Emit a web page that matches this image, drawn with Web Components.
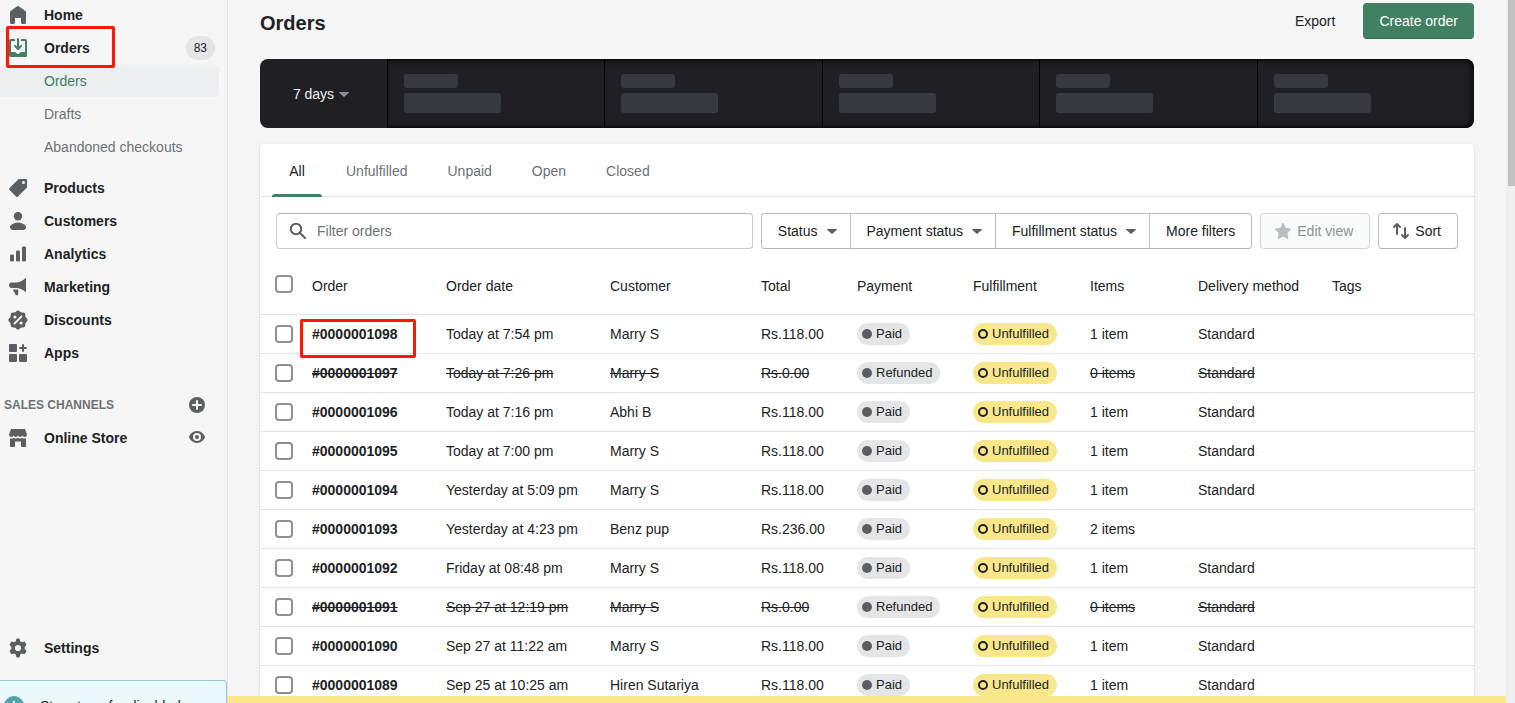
<!DOCTYPE html>
<html lang="en">
<head>
<meta charset="utf-8">
<title>Orders</title>
<style>
  html, body { height: 100%; }
  body {
    margin: 0;
    overflow: hidden;
    background: #f6f6f6;
    color: #202223;
    font: 14px/20px "Liberation Sans", Arial, sans-serif;
    --icon: #5c5f62;
    --green: #428062;
    --subdued: #6d7175;
    --line: #e1e3e5;
    --mark: #ff1706;
  }
</style>
</head>
<body>
<admin-frame>
  <side-nav slot="nav">
    <nav-item icon="home">Home</nav-item>
    <nav-item icon="orders" active marked count="83">Orders</nav-item>
    <nav-item sub selected>Orders</nav-item>
    <nav-item sub>Drafts</nav-item>
    <nav-item sub>Abandoned checkouts</nav-item>
    <nav-item icon="products" spaced>Products</nav-item>
    <nav-item icon="customers">Customers</nav-item>
    <nav-item icon="analytics">Analytics</nav-item>
    <nav-item icon="marketing">Marketing</nav-item>
    <nav-item icon="discounts">Discounts</nav-item>
    <nav-item icon="apps">Apps</nav-item>
    <nav-heading label="Add sales channel">SALES CHANNELS</nav-heading>
    <nav-item icon="store" action="eye" action-label="View your online store">Online Store</nav-item>
    <nav-item slot="footer" icon="settings">Settings</nav-item>
    <info-card slot="footer">Store transfer disabled</info-card>
  </side-nav>

  <page-header>
    Orders
    <ui-button slot="actions" plain>Export</ui-button>
    <ui-button slot="actions" primary>Create order</ui-button>
  </page-header>
  <stats-bar cells="5">7 days</stats-bar>
  <order-card>
    <tab-bar tabs="All,Unfulfilled,Unpaid,Open,Closed"></tab-bar>
    <filter-bar></filter-bar>
    <order-table></order-table>
  </order-card>
</admin-frame>

<script>
const ICONS = {
  home: '<path d="M18 7.261V17.5c0 .841-.672 1.5-1.5 1.5h-2c-.828 0-1.5-.659-1.5-1.5V13H7v4.477C7 18.318 6.328 19 5.5 19h-2c-.828 0-1.5-.682-1.5-1.523V7.261a1.5 1.5 0 0 1 .615-1.21l6.59-4.82a1.481 1.481 0 0 1 1.59 0l6.59 4.82A1.5 1.5 0 0 1 18 7.26z"/>',
  orders: '<path d="M11 1a1 1 0 1 0-2 0v7.586L7.707 7.293a1 1 0 0 0-1.414 1.414l3 3a1 1 0 0 0 1.414 0l3-3a1 1 0 0 0-1.414-1.414L11 8.586V1z"/><path d="M3 14V3h4V1H2.5A1.5 1.5 0 0 0 1 2.5v15A1.5 1.5 0 0 0 2.5 19h15a1.5 1.5 0 0 0 1.5-1.5v-15A1.5 1.5 0 0 0 17.5 1H13v2h4v11h-3.5c-.775 0-1.388.662-1.926 1.244l-.11.12A1.994 1.994 0 0 1 10 16a1.994 1.994 0 0 1-1.463-.637l-.111-.12C7.888 14.664 7.275 14 6.5 14H3z"/>',
  products: '<path fill-rule="evenodd" d="M10.293 1.293A1 1 0 0 1 11 1h7a1 1 0 0 1 1 1v7a1 1 0 0 1-.293.707l-9 9a1 1 0 0 1-1.414 0l-7-7a1 1 0 0 1 0-1.414l9-9zM15.5 6a1.5 1.5 0 1 0 0-3 1.5 1.5 0 0 0 0 3z"/>',
  customers: '<circle cx="10" cy="5.2" r="4.2"/><path d="M2.6 14.5C4 13.4 6.7 11.6 10 11.6s6 1.800 7.400 2.900c.6.500.8 1.300.6 2.050l-.35 1A2.1 2.1 0 0 1 15.700 19H4.300a2.100 2.100 0 0 1-1.950-1.450l-.35-1c-.2-.75 0-1.550.6-2.050z"/>',
  analytics: '<rect x="2" y="10.500" width="4" height="7" rx="1.300"/><rect x="8" y="6.500" width="4" height="11" rx="1.300"/><rect x="14" y="2.500" width="4" height="15" rx="1.300"/>',
  marketing: '<path d="M18 1.200v13.600c0 .2-.2.300-.4.200-2.700-2.200-5.300-3.700-8.600-4H3.500C2 11 1 9.700 1 8.200S2 5.500 3.500 5.500H9c3.300-.2 5.900-1.800 8.600-4.400.2-.2.4-.1.4.1zM5.200 12.500h5v4.800c0 .6-.4 1-1 1h-.9c-.4 0-.7-.2-.9-.6L6.900 16c-.2-.6-.6-1-1-1.300-.5-.4-.8-1.200-.7-2.200z"/>',
  discounts: '<rect x="2.600" y="2.600" width="14.800" height="14.800" rx="2.400"/><rect x="2.600" y="2.600" width="14.800" height="14.800" rx="2.400" transform="rotate(45 10 10)"/><path d="M6.500 13.500l7-7" stroke="#f6f6f6" stroke-width="1.800" stroke-linecap="round"/><circle cx="6.900" cy="7" r="1.600" fill="#f6f6f6"/><circle cx="13.100" cy="13" r="1.600" fill="#f6f6f6"/>',
  apps: '<rect x="1" y="1" width="8" height="8" rx="1"/><rect x="1" y="11" width="8" height="8" rx="1"/><rect x="11" y="11" width="8" height="8" rx="1"/><path d="M15 2v6M12 5h6" stroke="currentColor" stroke-width="2" stroke-linecap="round"/>',
  store: '<path d="M3 1h14l2 5.500c0 1.500-1 2.500-2.300 2.500-1.200 0-2-.8-2.300-1.700C14.100 8.200 13.300 9 12.200 9S10.300 8.200 10 7.300C9.700 8.200 8.900 9 7.800 9s-1.900-.8-2.200-1.700C5.300 8.200 4.500 9 3.300 9 2 9 1 8 1 6.500z"/><path d="M2 10.300c1.300.6 2.800.3 3.700-.6.900.8 3 1 4.300 0 1.300 1 3.400.8 4.300 0 .9.900 2.400 1.200 3.700.6V18c0 .6-.4 1-1 1h-3c-.6 0-1-.4-1-1v-4.500H7V18c0 .6-.4 1-1 1H3c-.6 0-1-.4-1-1z"/>',
  settings: '<path fill-rule="evenodd" d="M8.100 1.600c.1-.7.500-1.100 1.100-1.100h1.600c.6 0 1 .4 1.100 1.100l.3 1.700c.6.200 1.200.6 1.800 1l1.700-.6c.6-.2 1.100 0 1.400.5l1.100 2c.3.500.2 1.100-.3 1.500L16.600 9v2l1.300 1.100c.5.4.6 1 .3 1.500l-1.100 2c-.3.500-.8.700-1.400.5l-1.700-.6c-.6.500-1.200.8-1.800 1.100l-.3 1.800c-.1.700-.5 1.100-1.100 1.100H9.200c-.6 0-1-.4-1.100-1.100l-.3-1.800c-.6-.3-1.200-.6-1.800-1.100l-1.700.6c-.6.200-1.100 0-1.400-.5l-1.100-2c-.3-.5-.2-1.100.3-1.500L3.400 11V9L2.100 7.700c-.5-.4-.6-1-.3-1.500l1.100-2c.3-.5.800-.7 1.400-.5l1.700.6c.6-.4 1.200-.8 1.800-1zM10 13.100a3.100 3.100 0 1 0 0-6.200 3.100 3.100 0 0 0 0 6.200z"/>',
  plus: '<path fill-rule="evenodd" d="M10 18a8 8 0 1 0 0-16 8 8 0 0 0 0 16zM9 9V6a1 1 0 1 1 2 0v3h3a1 1 0 1 1 0 2h-3v3a1 1 0 1 1-2 0v-3H6a1 1 0 1 1 0-2z"/>',
  eye: '<path fill-rule="evenodd" d="M17.930 8.630C17.840 8.400 15.610 3 10 3 4.400 3 2.160 8.400 2.070 8.630a1 1 0 0 0 0 .74C2.160 9.600 4.400 15 10 15c5.610 0 7.840-5.400 7.930-5.630a1 1 0 0 0 0-.74zM10 13a4 4 0 1 1 0-8 4 4 0 0 1 0 8zm0-6a2 2 0 1 0 0 4 2 2 0 0 0 0-4z"/>',
  caret: '<path d="M5.600 8h8.800c.5 0 .7.500.4.800l-4.400 4a.6.600 0 0 1-.8 0l-4.400-4c-.3-.3-.1-.8.400-.8z"/>',
  search: '<circle cx="8" cy="8" r="5.200" fill="none" stroke="currentColor" stroke-width="2"/><path d="M11.800 11.800l5.200 5.200" stroke="currentColor" stroke-width="2.200" stroke-linecap="round"/>',
  star: '<path d="M9.300 2.500c.3-.6 1.100-.6 1.400 0l2 4.300 4.600.6c.7.100.9.900.5 1.400l-3.400 3.300.9 4.800c.1.700-.6 1.100-1.200.8L10 15.400l-4.100 2.300c-.6.300-1.300-.1-1.200-.8l.9-4.800-3.400-3.300c-.4-.5-.2-1.300.5-1.400l4.600-.6z"/>',
  sort: '<path d="M6 13V3.500M3 6l3-3 3 3M14 7v9.500M11 14l3 3 3-3" fill="none" stroke="currentColor" stroke-width="2" stroke-linecap="round" stroke-linejoin="round"/>',
  info: '<circle cx="10" cy="10" r="10"/><path d="M10 5.800v1M10 9.500v5" stroke="#ebf9fc" stroke-width="2" stroke-linecap="round"/>'
};

class BaseElement extends HTMLElement {
  connectedCallback() {
    if (this.shadowRoot) return;
    this.attachShadow({ mode: 'open' }).innerHTML =
      `<style>:host,*,*::after{box-sizing:border-box}${this.styles()}</style>${this.markup()}`;
  }
}

customElements.define('ui-icon', class extends BaseElement {
  styles() { return ':host{display:block;flex:none;width:20px;height:20px}svg{display:block;width:100%;height:100%;fill:currentColor}'; }
  markup() { return `<svg viewBox="0 0 20 20" aria-hidden="true">${ICONS[this.getAttribute('name')]}</svg>`; }
});

customElements.define('admin-frame', class extends BaseElement {
  styles() { return `
    :host { display: grid; grid-template-columns: 228px minmax(0, 1fr) 9px; height: 100vh; overflow: hidden; }
    .page { display: flex; flex-direction: column; min-height: 0; min-width: 0; }
    main { flex: 1; min-height: 0; overflow: hidden; padding: 0 32px; }
    .strip { flex: none; height: 7px; background: #f8e88b; }
    .track { background: #f0f0f0; padding-left: 2px; }
    .thumb { height: 186px; background: #c1c1c1; }`; }
  markup() { return `
    <slot name="nav"></slot>
    <div class="page"><main><slot></slot></main><div class="strip"></div></div>
    <div class="track"><div class="thumb"></div></div>`; }
});

customElements.define('side-nav', class extends BaseElement {
  styles() { return `
    :host { display: flex; min-height: 0; border-right: 1px solid var(--line); }
    nav { flex: 1; min-width: 0; display: flex; flex-direction: column; }
    .links { flex: 1; min-height: 0; display: flex; flex-direction: column; gap: 1px; margin-top: -1px; }
    .footer { flex: none; display: flex; flex-direction: column; gap: 16px; }`; }
  markup() { return '<nav aria-label="Main"><div class="links"><slot></slot></div><div class="footer"><slot name="footer"></slot></div></nav>'; }
});

customElements.define('nav-item', class extends BaseElement {
  styles() { return `
    :host { display: flex; align-items: center; position: relative; flex: none; height: 32px; margin-right: 8px; border-radius: 0 4px 4px 0; }
    :host([spaced]) { margin-top: 8px; }
    :host([selected]) { background: #edeeef; }
    :host([marked]) { z-index: 1; }
    a { flex: 1; display: flex; align-items: center; gap: 16px; padding-left: 8px; color: inherit; text-decoration: none; font-weight: 700; }
    ui-icon { color: var(--icon); }
    :host([active]) a ui-icon { color: var(--green); }
    :host([sub]) a { padding-left: 44px; font-weight: 400; color: var(--subdued); }
    :host([selected]) a { color: var(--green); }
    .count { margin-right: 4px; padding: 0 8px; border-radius: 12px; background: #e4e5e7; font-size: 12px; line-height: 24px; }
    button { margin: 0 12px 0 0; padding: 0; border: 0; background: none; }
    .mark { position: absolute; left: 6px; top: -6px; width: 109px; height: 42px; border: 3px solid var(--mark); border-radius: 2px; pointer-events: none; }`; }
  markup() {
    const at = n => this.getAttribute(n);
    return `<a href="#">${at('icon') ? `<ui-icon name="${at('icon')}"></ui-icon>` : ''}<span><slot></slot></span></a>
      ${at('count') ? `<span class="count">${at('count')}</span>` : ''}
      ${at('action') ? `<button type="button" aria-label="${at('action-label')}"><ui-icon name="${at('action')}"></ui-icon></button>` : ''}
      ${this.hasAttribute('marked') ? '<span class="mark"></span>' : ''}`;
  }
});

customElements.define('nav-heading', class extends BaseElement {
  styles() { return `
    :host { display: flex; align-items: center; justify-content: space-between; flex: none; height: 32px; margin: 19px 20px 0 4px; }
    h2 { margin: 0; font-size: 12px; line-height: 16px; font-weight: 700; color: var(--subdued); }
    button { padding: 0; border: 0; background: none; color: var(--icon); }`; }
  markup() { return `<h2><slot></slot></h2><button type="button" aria-label="${this.getAttribute('label')}"><ui-icon name="plus"></ui-icon></button>`; }
});

customElements.define('info-card', class extends BaseElement {
  styles() { return `
    :host { display: flex; gap: 16px; height: 23px; overflow: hidden; padding: 15px 4px 0; border: 1px solid #98c6cd; border-width: 1px 1px 0 0; border-radius: 0 4px 0 0; background: #ebf9fc; }
    ui-icon { color: #51a3ab; }
    span { white-space: nowrap; }`; }
  markup() { return '<ui-icon name="info"></ui-icon><span><slot></slot></span>'; }
});

customElements.define('page-header', class extends BaseElement {
  styles() { return `
    :host { display: flex; align-items: center; justify-content: space-between; padding: 3px 0 20px; }
    h1 { margin: 0; padding-top: 4px; font-size: 20px; line-height: 28px; font-weight: 700; }
    div { display: flex; gap: 12px; }`; }
  markup() { return '<h1><slot></slot></h1><div><slot name="actions"></slot></div>'; }
});

customElements.define('ui-button', class extends BaseElement {
  styles() { return `
    :host { display: block; flex: none; }
    button { display: flex; align-items: center; gap: 4px; height: 36px; width: 100%; margin: 0; padding: 0 16px; border: 1px solid #babfc3; border-bottom-color: #aeb4b9; border-radius: 4px; background: #fff; color: #202223; font: inherit; white-space: nowrap; }
    :host([plain]) button, :host([primary]) button { padding: 0 15px; }
    :host([plain]) button { background: none; border-color: transparent; }
    :host([primary]) button { background: var(--green); border-color: var(--green); border-bottom-color: #2f684c; color: #fff; }
    :host([icon]) button { padding-left: 12px; }
    :host([disclosure]) button { padding-right: 8px; }
    :host([first]) button { border-radius: 4px 0 0 4px; }
    :host([middle]) button { border-radius: 0; border-left: 0; }
    :host([last]) button { border-radius: 0 4px 4px 0; border-left: 0; }
    button:disabled { background: #fafbfb; border-color: #d2d5d8; color: #8c9196; }
    ui-icon { color: var(--icon); }
    button:disabled ui-icon { color: #babec3; }`; }
  markup() {
    const icon = this.getAttribute('icon');
    return `<button type="button"${this.hasAttribute('disabled') ? ' disabled' : ''}>${icon ? `<ui-icon name="${icon}"></ui-icon>` : ''}<span><slot></slot></span>${this.hasAttribute('disclosure') ? '<ui-icon name="caret"></ui-icon>' : ''}</button>`;
  }
});

customElements.define('stats-bar', class extends BaseElement {
  styles() { return `
    :host { display: flex; height: 69px; margin-bottom: 16px; border-radius: 8px; overflow: hidden; background: #202024; }
    button { flex: none; width: 127px; display: flex; align-items: center; justify-content: center; margin: 0; padding: 0; border: 0; background: none; color: #f1f2f3; font: inherit; }
    ui-icon { color: #8c8f93; }
    .cells { flex: 1; display: flex; position: relative; }
    .cells::after { content: ""; position: absolute; inset: 0; border-radius: 0 8px 8px 0; box-shadow: inset -2px 0 8px -2px #000, inset 0 3px 5px -3px #000, inset 0 -3px 5px -3px #000; }
    .cell { flex: 1; border-left: 1px solid #000; padding: 15px 16px 0; }
    .label, .value { border-radius: 3px; background: #36393d; }
    .label { width: 54px; height: 14px; margin-bottom: 5px; }
    .value { width: 97px; height: 20px; }`; }
  markup() {
    const cell = '<div class="cell"><div class="label"></div><div class="value"></div></div>';
    return `<button type="button"><slot></slot><ui-icon name="caret"></ui-icon></button><div class="cells">${cell.repeat(+this.getAttribute('cells'))}</div>`;
  }
});

customElements.define('order-card', class extends BaseElement {
  styles() { return ':host{display:block;background:#fff;border-radius:4px;box-shadow:0 0 5px rgba(23,24,24,.05),0 1px 2px rgba(0,0,0,.15)}'; }
  markup() { return '<slot></slot>'; }
});

customElements.define('tab-bar', class extends BaseElement {
  styles() { return `
    :host { display: flex; gap: 8px; height: 53px; padding: 0 12px; border-bottom: 1px solid var(--line); }
    button { position: relative; min-width: 50px; margin: 0; padding: 2px 16px 0; border: 0; background: none; font: inherit; color: var(--subdued); text-align: center; }
    button[aria-selected=true] { color: #202223; }
    button[aria-selected=true]::after { content: ""; position: absolute; left: 0; right: 0; bottom: -1px; height: 3px; border-radius: 3px 3px 0 0; background: var(--green); }`; }
  markup() { return this.getAttribute('tabs').split(',').map((t, i) => `<button type="button" role="tab" aria-selected="${i === 0}">${t}</button>`).join(''); }
  connectedCallback() { super.connectedCallback(); this.setAttribute('role', 'tablist'); }
});

customElements.define('filter-bar', class extends BaseElement {
  styles() { return `
    :host { display: flex; gap: 8px; padding: 16px; }
    label { flex: 1; min-width: 0; height: 36px; display: flex; align-items: center; gap: 8px; padding: 0 12px 0 11px; border: 1px solid #c9cccf; border-top-color: #aeb4b9; border-radius: 4px; }
    ui-icon { color: var(--icon); }
    input { flex: 1; min-width: 0; margin: 0; padding: 0 1px; border: 0; outline: 0; background: none; color: inherit; font: inherit; appearance: none; }
    input::placeholder { color: var(--subdued); opacity: 1; }
    .group { display: flex; }`; }
  markup() { return `
    <label><ui-icon name="search"></ui-icon><input type="search" placeholder="Filter orders" aria-label="Filter orders"></label>
    <div class="group">
      <ui-button first disclosure>Status</ui-button>
      <ui-button middle disclosure>Payment status</ui-button>
      <ui-button middle disclosure>Fulfillment status</ui-button>
      <ui-button last>More filters</ui-button>
    </div>
    <ui-button icon="star" disabled>Edit view</ui-button>
    <ui-button icon="sort">Sort</ui-button>`; }
});

customElements.define('status-badge', class extends BaseElement {
  styles() { return `
    :host { display: inline-flex; align-items: center; gap: 4px; height: 22px; padding: 0 8px 0 5px; border-radius: 11px; background: #e4e5e7; font-size: 13px; line-height: 20px; vertical-align: top; }
    i { width: 10px; height: 10px; border-radius: 50%; background: var(--icon); }
    :host([attention]) { background: #f8e88b; }
    :host([attention]) i { background: none; border: 2px solid #202223; }
    span { padding-bottom: 1px; }`; }
  markup() { return '<i></i><span><slot></slot></span>'; }
});

const ORDERS = [
  ['1098', 'Today at 7:54 pm', 'Marry S', '118.00', 'Paid', '1 item', 'Standard'],
  ['1097', 'Today at 7:26 pm', 'Marry S', '0.00', 'Refunded', '0 items', 'Standard'],
  ['1096', 'Today at 7:16 pm', 'Abhi B', '118.00', 'Paid', '1 item', 'Standard'],
  ['1095', 'Today at 7:00 pm', 'Marry S', '118.00', 'Paid', '1 item', 'Standard'],
  ['1094', 'Yesterday at 5:09 pm', 'Marry S', '118.00', 'Paid', '1 item', 'Standard'],
  ['1093', 'Yesterday at 4:23 pm', 'Benz pup', '236.00', 'Paid', '2 items', ''],
  ['1092', 'Friday at 08:48 pm', 'Marry S', '118.00', 'Paid', '1 item', 'Standard'],
  ['1091', 'Sep 27 at 12:19 pm', 'Marry S', '0.00', 'Refunded', '0 items', 'Standard'],
  ['1090', 'Sep 27 at 11:22 am', 'Marry S', '118.00', 'Paid', '1 item', 'Standard'],
  ['1089', 'Sep 25 at 10:25 am', 'Hiren Sutariya', '118.00', 'Paid', '1 item', 'Standard']
];

customElements.define('order-table', class extends BaseElement {
  styles() { return `
    :host { display: block; }
    table { width: 100%; table-layout: fixed; border-collapse: separate; border-spacing: 0; }
    th, td { padding: 0; border-bottom: 1px solid var(--line); text-align: left; font-weight: 400; white-space: nowrap; }
    thead th, thead td { height: 50px; padding-top: 11px; vertical-align: top; }
    thead td { padding-top: 10px; }
    tbody th, tbody td { height: 39px; vertical-align: middle; }
    tr > :first-child { padding-left: 15px; }
    input { appearance: none; display: block; width: 18px; height: 18px; margin: 0; border: 2px solid #8c9196; border-radius: 4px; background: #fff; }
    tbody th { position: relative; font-weight: 700; }
    th a { color: inherit; text-decoration: none; }
    .void td, .void th a { text-decoration: line-through; }
    .mark { position: absolute; left: -12px; top: 4px; width: 116px; height: 39px; border: 3px solid var(--mark); border-radius: 2px; pointer-events: none; }
    .check { width: 52px; } .order { width: 134px; } .date { width: 164px; } .customer { width: 151px; }
    .total { width: 96px; } .payment { width: 116px; } .fulfillment { width: 117px; } .items { width: 108px; }
    .delivery { width: 134px; }`; }
  markup() {
    const cols = ['check', 'order', 'date', 'customer', 'total', 'payment', 'fulfillment', 'items', 'delivery', 'tags'];
    const heads = ['Order', 'Order date', 'Customer', 'Total', 'Payment', 'Fulfillment', 'Items', 'Delivery method', 'Tags'];
    const rows = ORDERS.map(([no, date, who, total, pay, items, ship], i) => `
      <tr${pay === 'Refunded' ? ' class="void"' : ''}>
        <td><input type="checkbox" aria-label="Select order #000000${no}"></td>
        <th scope="row"><a href="#">#000000${no}</a>${i === 0 ? '<span class="mark"></span>' : ''}</th>
        <td>${date}</td><td>${who}</td><td>Rs.${total}</td>
        <td><status-badge>${pay}</status-badge></td>
        <td><status-badge attention>Unfulfilled</status-badge></td>
        <td>${items}</td><td>${ship}</td><td></td>
      </tr>`).join('');
    return `<table><colgroup>${cols.map(c => `<col class="${c}">`).join('')}</colgroup>
      <thead><tr><td><input type="checkbox" aria-label="Select all orders"></td>${heads.map(h => `<th scope="col">${h}</th>`).join('')}</tr></thead>
      <tbody>${rows}</tbody></table>`;
  }
});
</script>
</body>
</html>
